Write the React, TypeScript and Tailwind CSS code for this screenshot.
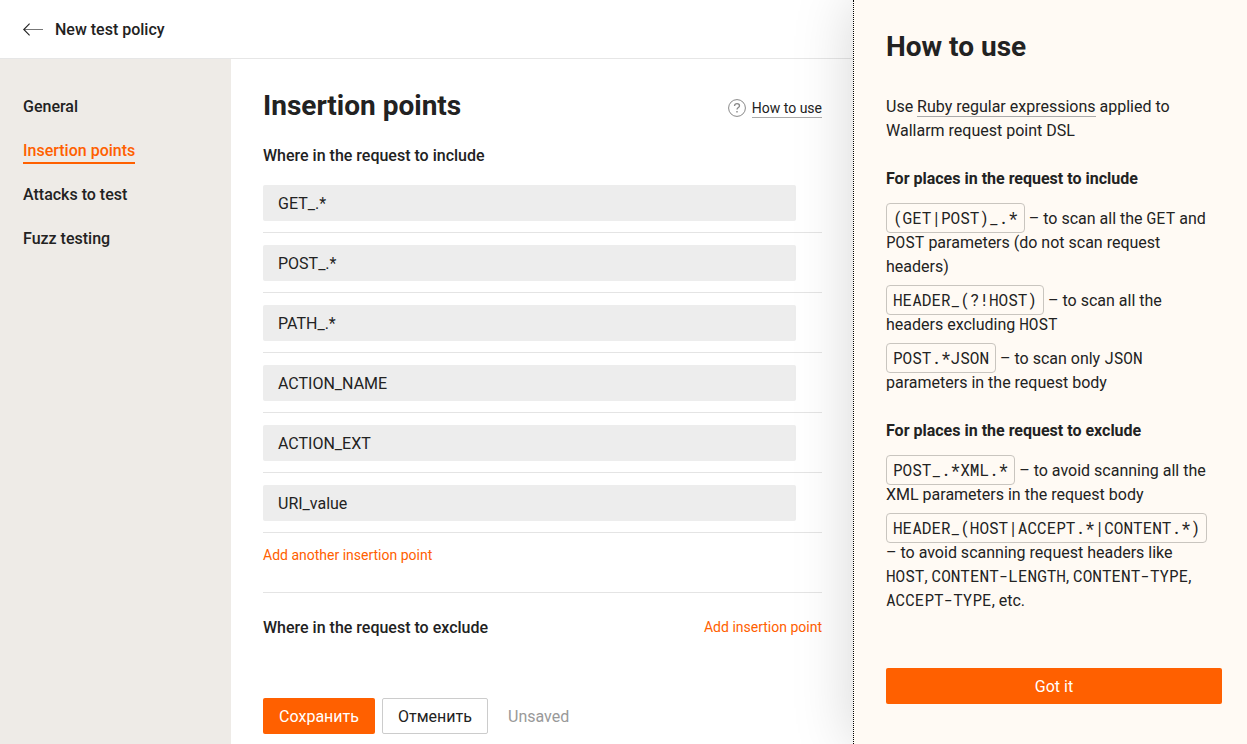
import type { ReactNode } from 'react';

const navItems = ['General', 'Insertion points', 'Attacks to test', 'Fuzz testing'];
const points = ['GET_.*', 'POST_.*', 'PATH_.*', 'ACTION_NAME', 'ACTION_EXT', 'URI_value'];

function Mono({ children }: { children: ReactNode }) {
  return <code className="font-['Roboto_Mono','Liberation_Mono',monospace] leading-none">{children}</code>;
}

function Chip({ children }: { children: ReactNode }) {
  return (
    <code className="rounded border border-[#c9c5bf] px-1.5 pt-[3px] pb-1 font-['Roboto_Mono','Liberation_Mono',monospace] leading-none">
      {children}
    </code>
  );
}

function Header() {
  return (
    <header className="flex h-[59px] shrink-0 items-center border-b border-[#e6e6e6] pl-[23px]">
      <svg width="20" height="14" viewBox="0 0 20 14" fill="none" stroke="#222" className="mr-3">
        <path d="M0.8 7.5H20" stroke="#777" />
        <path d="M6.6 1.7L0.8 7.5L6.6 13.3" strokeWidth="1.1" />
      </svg>
      <span className="pt-0.5 font-medium">New test policy</span>
    </header>
  );
}

function Sidebar() {
  return (
    <nav className="flex w-[231px] shrink-0 flex-col items-start gap-5 bg-[#eeebe7] pt-9 pl-[23px] font-medium">
      {navItems.map((item) => (
        <a
          key={item}
          className={
            item === 'Insertion points'
              ? '-mb-px box-content h-[23px] border-b-2 border-[#ff6000] leading-6 text-[#ff6000]'
              : 'h-6 leading-6'
          }
        >
          {item}
        </a>
      ))}
    </nav>
  );
}

function HelpPanel() {
  return (
    <aside className="flex w-[394px] shrink-0 flex-col border-l border-dotted border-black bg-[#fffaf4] pl-8 shadow-[0_0_56px_rgba(0,0,0,0.17)]">
      <h2 className="mt-[29px] text-[28px] leading-9 font-bold">How to use</h2>
      <p className="mt-[30px] w-[336px] leading-6">
        Use <a className="border-b border-[#aaa]">Ruby regular expressions</a> applied to
        <br />
        Wallarm request point DSL
      </p>
      <h3 className="mt-6 leading-6 font-bold">For places in the request to include</h3>
      <div className="mt-4 flex w-[336px] flex-col gap-2.5 leading-6">
        <p>
          <Chip>(GET|POST)_.*</Chip> – to scan all the <Mono>GET</Mono> and
          <br />
          <Mono>POST</Mono> parameters (do not scan request
          <br />
          headers)
        </p>
        <p>
          <Chip>HEADER_(?!HOST)</Chip> – to scan all the
          <br />
          headers excluding <Mono>HOST</Mono>
        </p>
        <p>
          <Chip>POST.*JSON</Chip> – to scan only <Mono>JSON</Mono>
          <br />
          parameters in the request body
        </p>
      </div>
      <h3 className="mt-6 leading-6 font-bold">For places in the request to exclude</h3>
      <div className="mt-4 flex w-[336px] flex-col gap-2.5 leading-6">
        <p>
          <Chip>POST_.*XML.*</Chip> – to avoid scanning all the
          <br />
          XML parameters in the request body
        </p>
        <p>
          <Chip>HEADER_(HOST|ACCEPT.*|CONTENT.*)</Chip>
          <br />– to avoid scanning request headers like
          <br />
          <Mono>HOST</Mono>, <Mono>CONTENT-LENGTH</Mono>, <Mono>CONTENT-TYPE</Mono>,
          <br />
          <Mono>ACCEPT-TYPE</Mono>, etc.
        </p>
      </div>
      <button className="mt-[55px] h-9 w-[336px] rounded-xs bg-[#ff6000] pt-0.5 text-white">Got it</button>
    </aside>
  );
}

export default function App() {
  return (
    <div className="flex h-[744px] w-[1247px] overflow-hidden bg-white font-['Roboto',sans-serif] text-base text-[#222]">
      <div className="flex w-[853px] shrink-0 flex-col">
        <Header />
        <div className="flex flex-1">
          <Sidebar />
          <main className="flex w-[591px] flex-col pl-8">
            <div className="flex items-center justify-between pt-[29px]">
              <h1 className="text-[28px] leading-9 font-bold">Insertion points</h1>
              <div className="flex items-center gap-1.5 text-sm">
                <svg width="18" height="18" viewBox="0 0 18 18" fill="none" stroke="#888" className="mt-1">
                  <circle cx="9" cy="9" r="8.4" strokeWidth="1" />
                  <path d="M6.5 7.1C6.5 5.5 7.5 4.7 9 4.7S11.5 5.5 11.5 6.9C11.5 8.4 9 8.8 9 10.6" strokeWidth="1.3" />
                  <path d="M9 12V13.5" strokeWidth="1.4" />
                </svg>
                <a className="mt-[5px] border-b border-[#aaa] leading-[18px]">How to use</a>
              </div>
            </div>
            <h2 className="mt-5 mb-[17px] leading-6 font-medium">Where in the request to include</h2>
            {points.map((point) => (
              <div key={point} className="mb-3 border-b border-[#e4e4e4] pb-[11px]">
                <div className="flex h-9 w-[533px] items-center rounded-xs bg-[#ededed] pt-0.5 pl-[15px]">{point}</div>
              </div>
            ))}
            <div className="h-12 border-b border-[#e4e4e4] text-sm leading-5 text-[#ff6000]">Add another insertion point</div>
            <div className="mt-[23px] flex items-center justify-between">
              <h2 className="leading-6 font-medium">Where in the request to exclude</h2>
              <a className="-mt-0.5 text-sm text-[#ff6000]">Add insertion point</a>
            </div>
            <div className="mt-[58px] flex items-center">
              <button className="h-9 w-28 rounded-xs bg-[#ff6000] pt-0.5 text-white">Сохранить</button>
              <button className="ml-[7px] h-9 w-[106px] rounded-xs border border-[#ccc] pt-0.5">Отменить</button>
              <span className="ml-5 pt-0.5 text-[#999]">Unsaved</span>
            </div>
          </main>
        </div>
      </div>
      <HelpPanel />
    </div>
  );
}
